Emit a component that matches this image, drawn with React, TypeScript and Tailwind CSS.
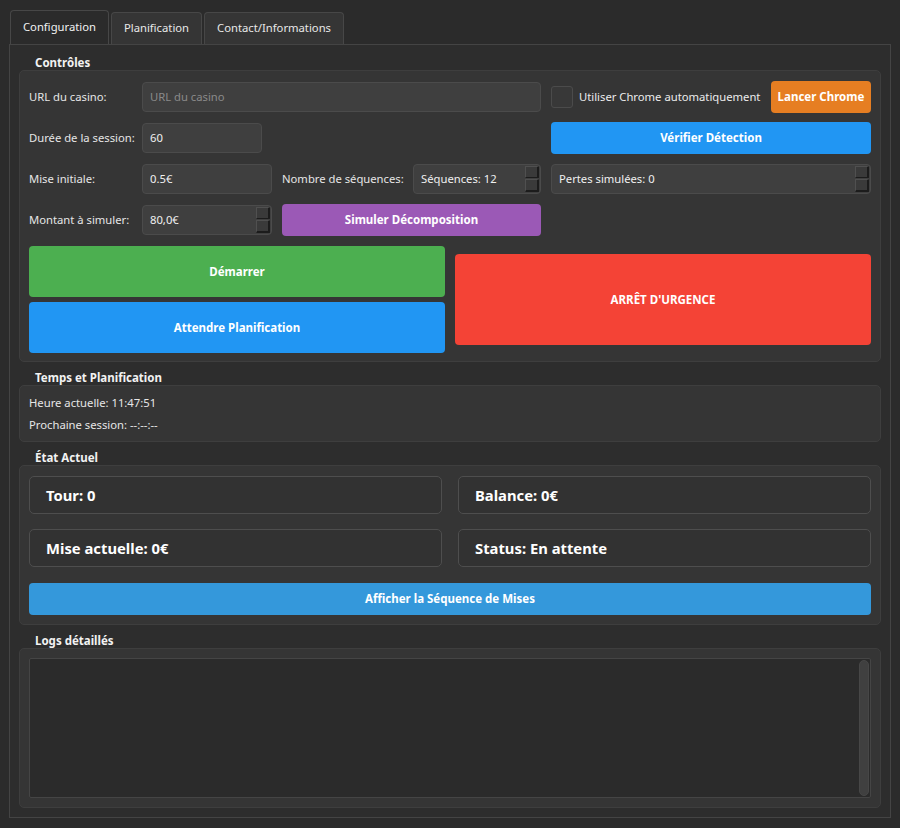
import React from 'react';

const font = { fontFamily: '"Noto Sans", "Open Sans", sans-serif' };

function Field({ value, placeholder, className = '', spin = false }: { value?: string; placeholder?: string; className?: string; spin?: boolean }) {
  return (
    <div
      className={`h-[30px] self-center flex items-center rounded-[4px] border border-[#4b4b4b] bg-[#3f3f3f] pl-[7px] pr-[1px] ${className}`}
    >
      <span className={`flex-1 truncate ${value ? 'text-[#f0f0f0]' : 'text-[#8a8a8a]'}`}>{value || placeholder}</span>
      {spin && (
        <div className="flex flex-col gap-[1px] h-[26px] w-[14px]">
          <div className="flex-1 bg-[#3a3a3a] border-t border-l border-[#505050] border-r-2 border-b border-r-[#1c1c1c] border-b-[#1c1c1c] rounded-[1px]" />
          <div className="flex-1 bg-[#3a3a3a] border-t border-l border-[#505050] border-r-2 border-b-2 border-r-[#1c1c1c] border-b-[#1c1c1c] rounded-[1px]" />
        </div>
      )}
    </div>
  );
}

function Group({ title, children, className = '' }: { title: string; children: React.ReactNode; className?: string }) {
  return (
    <div className={`flex flex-col ${className}`}>
      <div className="h-[14px] leading-[14px] pl-[16px] font-bold text-[#f2f2f2] text-[11.5px]">{title}</div>
      <div className="flex-1 flex flex-col rounded-[5px] border border-[#3e3e3e] bg-[#353535]">{children}</div>
    </div>
  );
}

function StatCard({ text }: { text: string }) {
  return (
    <div className="h-[38px] flex items-center rounded-[5px] border border-[#4e4e4e] bg-[#323232] pl-[16px] text-[14.8px] font-bold text-white">
      {text}
    </div>
  );
}

export default function App() {
  const label = 'self-center text-[#e6e6e6] whitespace-nowrap';
  const btn = 'rounded-[4px] font-bold text-white text-[11.5px]';
  return (
    <div className="h-[828px] w-[900px] bg-[#2b2b2b] text-[11.25px] text-[#e6e6e6] px-[9px] pt-[10px] pb-[10px] flex flex-col" style={font}>
      {/* tab bar */}
      <div className="flex items-end gap-[2px] pl-[1px] h-[34px]">
        <div className="h-[34px] px-[12px] flex items-center rounded-t-[4px] border border-b-0 border-[#474747] bg-[#2b2b2b] text-[#f2f2f2]">
          Configuration
        </div>
        <div className="h-[32px] px-[12px] flex items-center rounded-t-[4px] border border-b-0 border-[#474747] bg-[#353535] text-[#e8e8e8]">
          Planification
        </div>
        <div className="h-[32px] px-[12px] flex items-center rounded-t-[4px] border border-b-0 border-[#474747] bg-[#353535] text-[#e8e8e8]">
          Contact/Informations
        </div>
      </div>

      {/* pane */}
      <div className="flex-1 flex flex-col gap-[9px] border border-[#444444] bg-[#2d2d2d] px-[9px] pt-[11px] pb-[9px]">
        <Group title="Contrôles">
          <div className="px-[9px] pt-[10px] pb-[8px]">
            <div className="grid grid-cols-[103px_130px_121px_128px_1fr] grid-rows-[32px_32px_32px_32px] gap-x-[10px] gap-y-[9px]">
              <span className={label}>URL du casino:</span>
              <Field placeholder="URL du casino" className="col-span-3" />
              <div className="flex items-center justify-between">
                <div className="flex items-center gap-[6px]">
                  <div className="w-[22px] h-[22px] rounded-[3px] border border-[#4b4b4b] bg-[#383838]" />
                  <span className="text-[#ececec] whitespace-nowrap">Utiliser Chrome automatiquement</span>
                </div>
                <button className={`h-[32px] w-[100px] bg-[#e67e22] ${btn}`}>Lancer Chrome</button>
              </div>

              <span className={label}>Durée de la session:</span>
              <Field value="60" className="w-[120px]" />
              <div className="col-span-2" />
              <button className={`h-[32px] bg-[#2196f3] ${btn}`}>Vérifier Détection</button>

              <span className={label}>Mise initiale:</span>
              <Field value="0.5€" />
              <span className={label}>Nombre de séquences:</span>
              <Field value="Séquences: 12" spin />
              <Field value="Pertes simulées: 0" spin />

              <span className={label}>Montant à simuler:</span>
              <Field value="80,0€" spin />
              <button className={`col-span-2 h-[32px] bg-[#9b59b6] ${btn}`}>Simuler Décomposition</button>
            </div>

            <div className="grid grid-cols-2 gap-x-[10px] mt-[10px]">
              <div className="flex flex-col gap-[5px]">
                <button className={`h-[51px] bg-[#4caf50] ${btn}`}>Démarrer</button>
                <button className={`h-[51px] bg-[#2196f3] ${btn}`}>Attendre Planification</button>
              </div>
              <button className={`h-[91px] self-center bg-[#f44336] ${btn}`}>ARRÊT D'URGENCE</button>
            </div>
          </div>
        </Group>

        <Group title="Temps et Planification">
          <div className="px-[9px] pt-[6px] pb-[5px] leading-[22px] text-[#e6e6e6]">
            <div>Heure actuelle: 11:47:51</div>
            <div>Prochaine session: --:--:--</div>
          </div>
        </Group>

        <Group title="État Actuel">
          <div className="px-[9px] pt-[10px] pb-[9px] flex flex-col">
            <div className="grid grid-cols-2 gap-x-[16px] gap-y-[15px]">
              <StatCard text="Tour: 0" />
              <StatCard text="Balance: 0€" />
              <StatCard text="Mise actuelle: 0€" />
              <StatCard text="Status: En attente" />
            </div>
            <button className={`mt-[16px] h-[32px] bg-[#3498db] ${btn}`}>
              Afficher la Séquence de Mises
            </button>
          </div>
        </Group>

        <Group title="Logs détaillés" className="flex-1">
          <div className="flex-1 flex p-[9px]">
            <div className="flex-1 flex justify-end rounded-[2px] border border-[#454545] bg-[#2b2b2b] p-[1px] pr-[1px]">
              <div className="w-[10px] rounded-[5px] bg-[#404040] border border-[#474747]" />
            </div>
          </div>
        </Group>
      </div>
    </div>
  );
}
